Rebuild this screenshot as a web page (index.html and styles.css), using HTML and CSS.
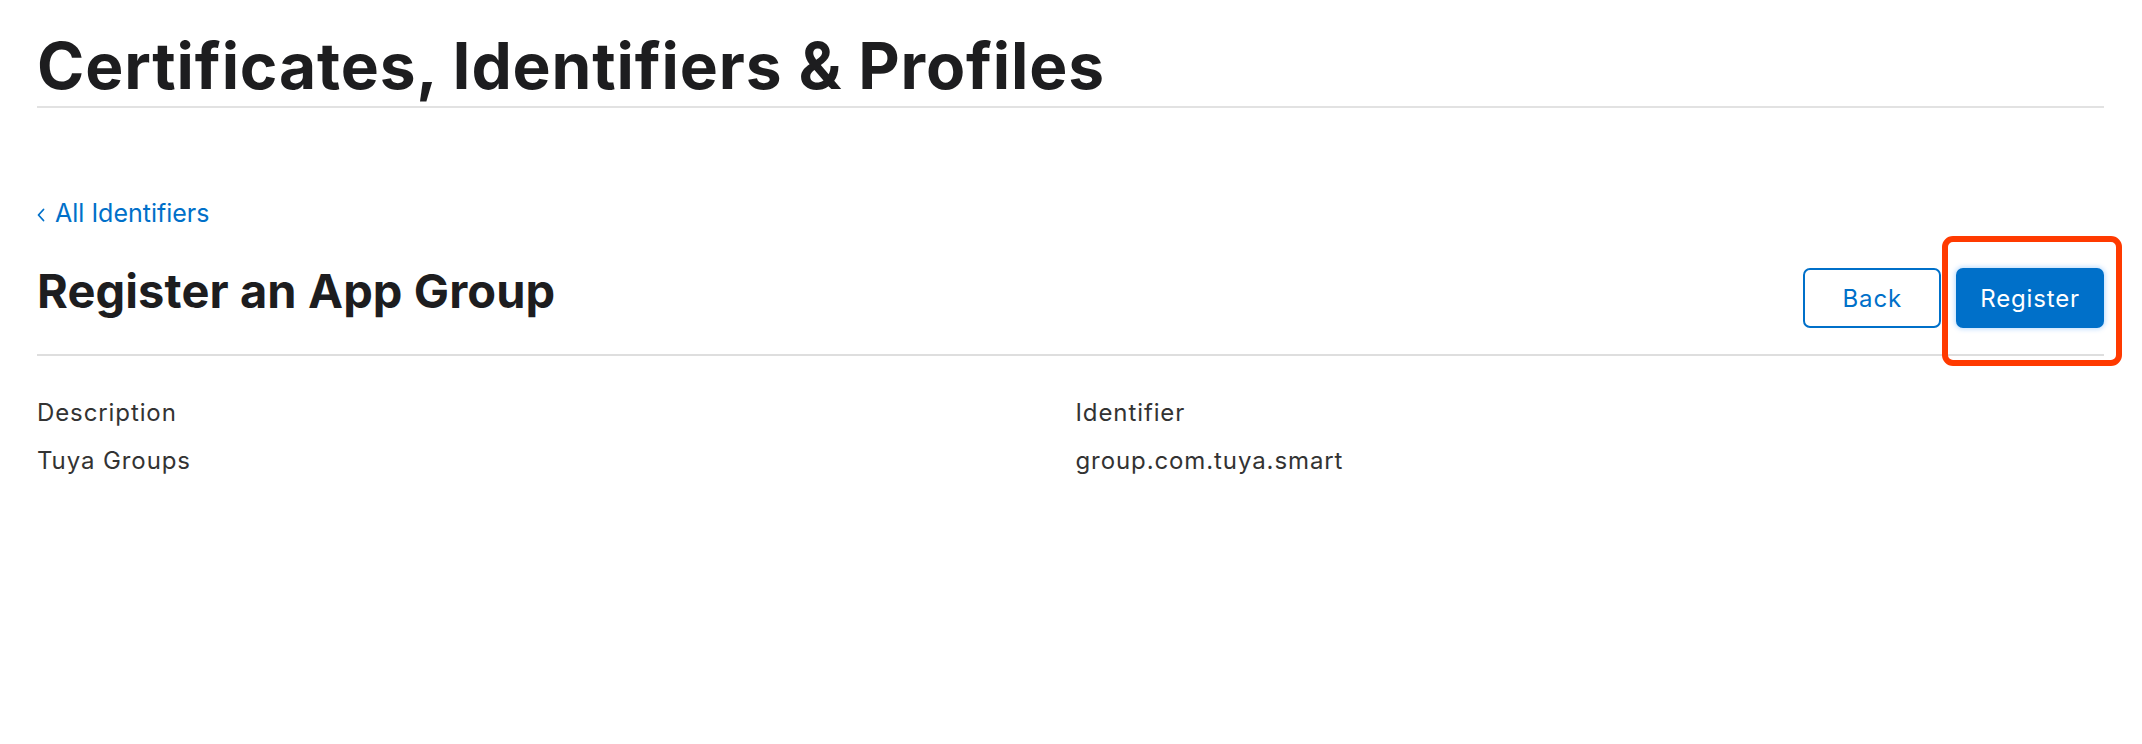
FILE: index.html
```html
<!DOCTYPE html>
<html lang="en">
<head>
<meta charset="utf-8">
<title>Register an App Group</title>
<link rel="stylesheet" href="styles.css">
</head>
<body>
<div class="page">
  <header class="page-header">
    <h1 class="page-title">Certificates, Identifiers &amp; Profiles</h1>
  </header>

  <a class="back-link" href="#">
    <svg class="chev" width="8" height="14" viewBox="0 0 8 14" aria-hidden="true">
      <path d="M6.5 1.5 L1.5 7 L6.5 12.5" fill="none" stroke="#0070c9" stroke-width="1.8" stroke-linecap="round" stroke-linejoin="round"/>
    </svg>
    <span>All Identifiers</span>
  </a>

  <div class="section-head">
    <h2 class="section-title">Register an App Group</h2>
    <div class="actions">
      <button class="btn btn-secondary" type="button">Back</button>
      <div class="highlight-wrap">
        <button class="btn btn-primary" type="button">Register</button>
        <span class="annotation"></span>
      </div>
    </div>
  </div>

  <div class="details">
    <div class="field">
      <div class="field-label">Description</div>
      <div class="field-value">Tuya Groups</div>
    </div>
    <div class="field">
      <div class="field-label">Identifier</div>
      <div class="field-value">group.com.tuya.smart</div>
    </div>
  </div>
</div>
</body>
</html>
```
FILE: styles.css
```css
* { box-sizing: border-box; }

html, body {
  margin: 0;
  padding: 0;
  background: #ffffff;
}

body {
  font-family: "Inter", "Liberation Sans", sans-serif;
  color: #1d1d1f;
}

.page {
  padding: 30px 38px 0 37px;
}

.page-header {
  padding-bottom: 4px;
  border-bottom: 2px solid #e2e2e2;
}

.page-title {
  margin: 0;
  font-size: 64px;
  line-height: 72px;
  font-weight: 700;
  letter-spacing: 0.85px;
  color: #1d1d1f;
}

.back-link {
  display: inline-flex;
  align-items: center;
  margin-top: 90px;
  height: 30px;
  font-size: 25px;
  line-height: 30px;
  color: #0070c9;
  text-decoration: none;
}

.back-link .chev {
  display: block;
  margin-right: 10px;
  margin-top: 3px;
}

.section-head {
  display: flex;
  justify-content: space-between;
  align-items: flex-start;
  margin-top: 35px;
  padding-bottom: 26px;
  border-bottom: 2px solid #dedede;
}

.section-title {
  margin: 0;
  font-size: 47px;
  line-height: 56px;
  font-weight: 700;
  letter-spacing: 0.1px;
  color: #1d1d1f;
}

.actions {
  display: flex;
  gap: 15px;
  margin-top: 5px;
}

.btn {
  height: 60px;
  min-width: 138px;
  padding: 0 24px;
  border-radius: 7px;
  font-family: "Inter", "Liberation Sans", sans-serif;
  font-size: 24px;
  letter-spacing: 0.85px;
  cursor: pointer;
}

.btn-secondary {
  background: #ffffff;
  color: #0070c9;
  border: 2px solid #0070c9;
}

.btn-primary {
  background: #0070c9;
  color: #ffffff;
  border: 0;
  box-shadow: 0 0 5px 1px rgba(0, 125, 250, 0.28);
}

.highlight-wrap {
  position: relative;
}

.annotation {
  position: absolute;
  left: -14px;
  top: -32px;
  right: -18px;
  bottom: -38px;
  border: 6px solid #ff3a00;
  border-radius: 11px;
  pointer-events: none;
}

.details {
  display: grid;
  grid-template-columns: 1fr 1fr;
  column-gap: 10px;
  padding-top: 33px;
}

.field-label,
.field-value {
  font-size: 24px;
  line-height: 48px;
  letter-spacing: 0.9px;
  color: #333333;
}
```
